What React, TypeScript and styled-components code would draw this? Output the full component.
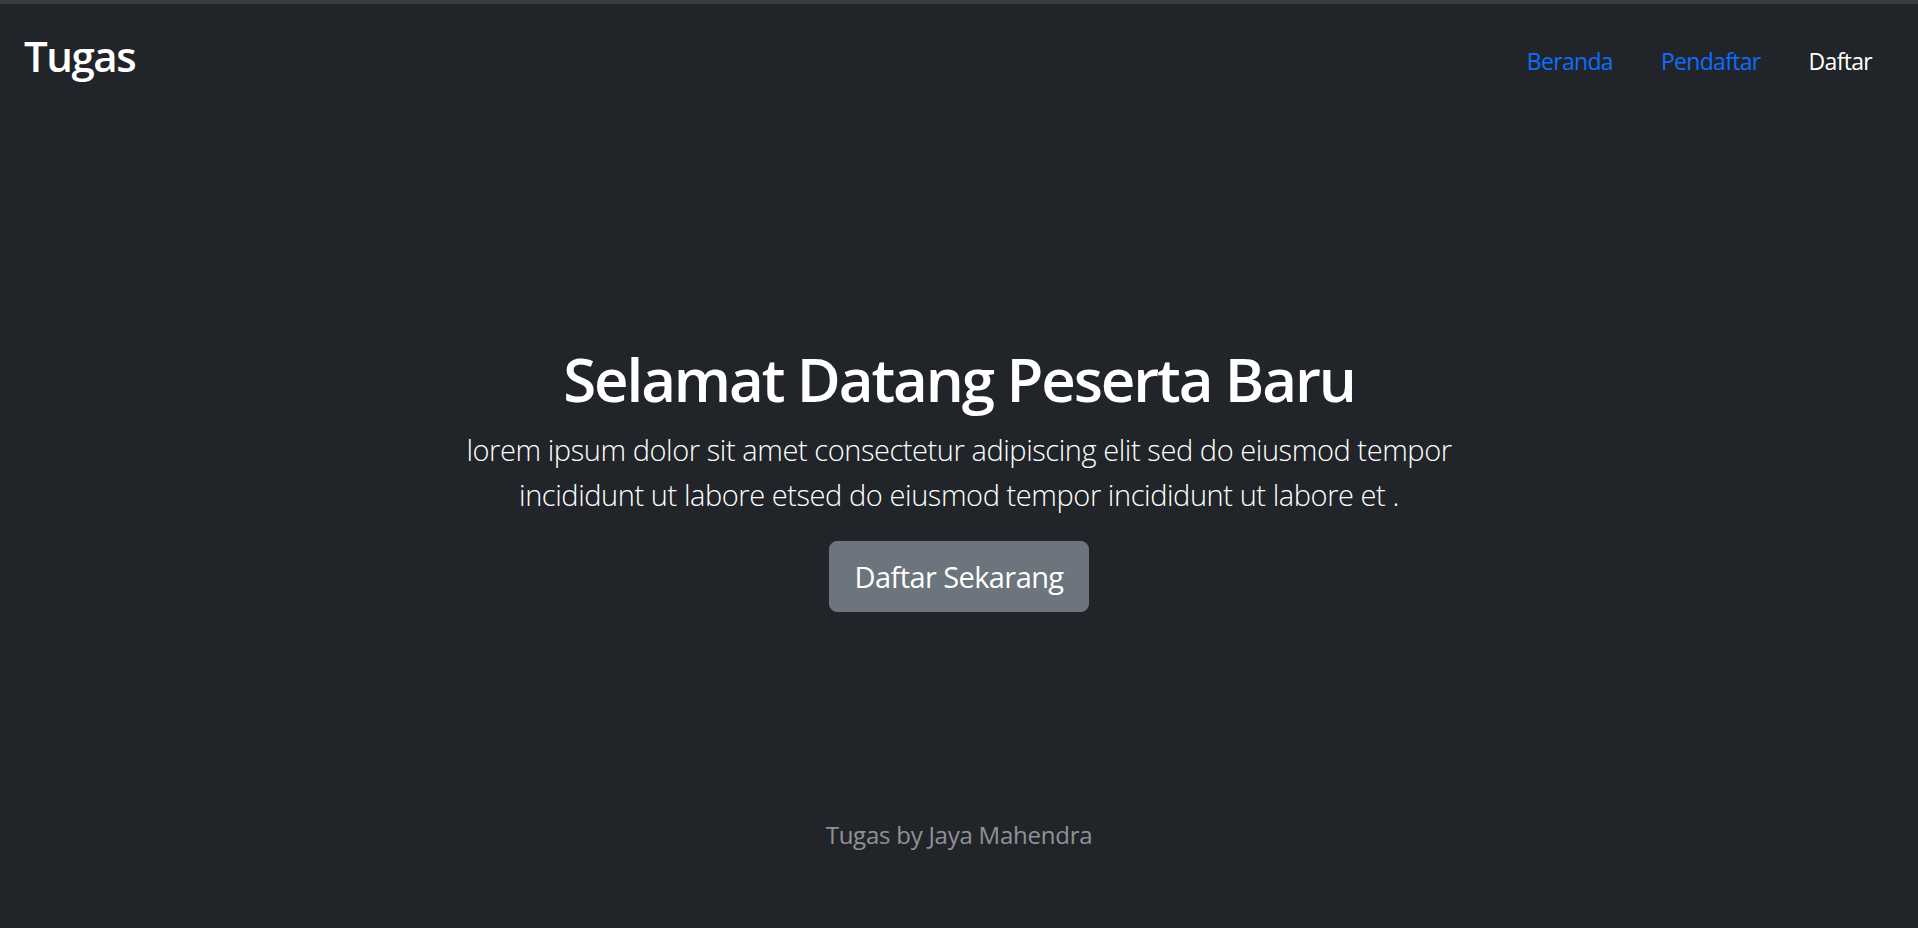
import React from "react";
import styled, { createGlobalStyle } from "styled-components";

const GlobalStyle = createGlobalStyle`
  html, body {
    margin: 0;
    padding: 0;
    background: #212529;
  }
  body {
    font-family: "Open Sans", "Noto Sans", "Liberation Sans", sans-serif;
    color: #ffffff;
    -webkit-font-smoothing: antialiased;
  }
  * { box-sizing: border-box; }
`;

const Page = styled.div`
  min-height: 100vh;
  display: flex;
  flex-direction: column;
  border-top: 4px solid #3a3b3f;
  background: #212529;
`;

const Navbar = styled.nav`
  display: flex;
  justify-content: space-between;
  align-items: flex-start;
  padding: 20px 22px 20px 24px;
`;

const Brand = styled.a`
  font-size: 42px;
  line-height: 63px;
  font-weight: 600;
  color: #ffffff;
  text-decoration: none;
  letter-spacing: -0.035em;
`;

const NavList = styled.ul`
  display: flex;
  list-style: none;
  margin: 0;
  padding: 19px 0 0;
`;

const NavLink = styled.a<{ $active?: boolean }>`
  display: block;
  padding: 0 24px;
  font-size: 23px;
  line-height: 36px;
  letter-spacing: -0.03em;
  color: ${(p) => (p.$active ? "#ffffff" : "#0d6efd")};
  text-decoration: none;
`;

const Hero = styled.main`
  flex: 1;
  display: flex;
  flex-direction: column;
  align-items: center;
  padding-top: 236px;
  text-align: center;
`;

const Title = styled.h1`
  margin: 0 0 12px;
  font-size: 60px;
  line-height: 72px;
  font-weight: 600;
  letter-spacing: -0.035em;
`;

const Lead = styled.p`
  margin: 0 0 24px;
  max-width: 1100px;
  font-size: 29px;
  line-height: 45px;
  font-weight: 300;
  letter-spacing: -0.015em;
`;

const Button = styled.a`
  display: inline-block;
  padding: 12px 24px;
  font-size: 29px;
  line-height: 45px;
  font-weight: 400;
  letter-spacing: -0.02em;
  color: #ffffff;
  background: #6c757d;
  border: 1.5px solid #6c757d;
  border-radius: 8px;
  text-decoration: none;
`;

const Footer = styled.footer`
  padding: 0 0 75px;
  text-align: center;
  font-size: 24px;
  line-height: 36px;
  letter-spacing: -0.01em;
  color: rgba(255, 255, 255, 0.5);
`;

export default function App() {
  return (
    <>
      <GlobalStyle />
      <Page>
        <Navbar>
          <Brand href="#">Tugas</Brand>
          <NavList>
            <li><NavLink href="#">Beranda</NavLink></li>
            <li><NavLink href="#">Pendaftar</NavLink></li>
            <li><NavLink href="#" $active>Daftar</NavLink></li>
          </NavList>
        </Navbar>
        <Hero>
          <Title>Selamat Datang Peserta Baru</Title>
          <Lead>
            lorem ipsum dolor sit amet consectetur adipiscing elit sed do eiusmod tempor incididunt ut labore etsed do eiusmod tempor incididunt ut labore et .
          </Lead>
          <Button href="#">Daftar Sekarang</Button>
        </Hero>
        <Footer>Tugas by Jaya Mahendra</Footer>
      </Page>
    </>
  );
}
